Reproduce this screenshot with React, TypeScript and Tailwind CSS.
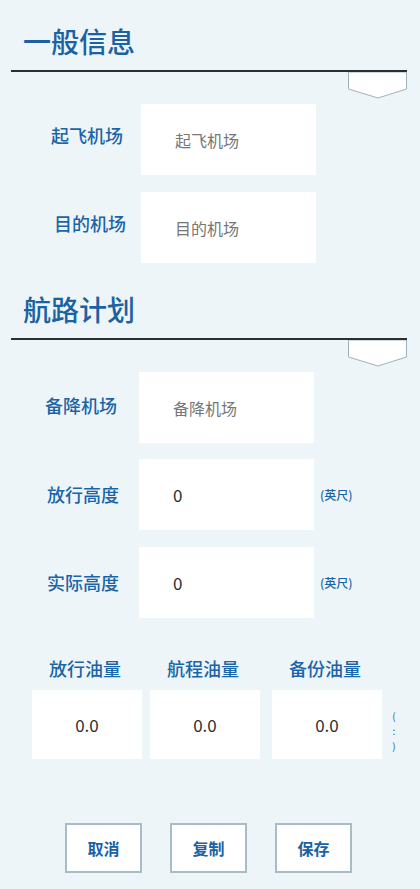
import React from 'react'

const FONT = { fontFamily: '"Noto Sans CJK SC", "Noto Sans", sans-serif' }

function SectionHeader({ title }: { title: string }) {
  return (
    <div>
      <h2 className="pl-[23px] text-[28px] leading-[42px] font-medium text-[#1a62a4]">{title}</h2>
      <div className="relative mt-[8px] ml-[11px] w-[396px] h-[2px] bg-[#2a2f33]">
        <svg className="absolute right-0 top-[2px]" width="59" height="27" viewBox="0 0 59 27">
          <polygon points="0.5,0 58.5,0 58.5,17 30,26 0.5,17" fill="#ffffff" stroke="#9fb1b9" strokeWidth="1" />
        </svg>
      </div>
    </div>
  )
}

function FieldRow({
  label,
  value,
  placeholder,
  unit,
  labelClass,
}: {
  label: string
  value?: string
  placeholder?: string
  unit?: string
  labelClass: string
}) {
  return (
    <div className="flex items-center h-[71px]">
      <div className={`text-center text-[18px] font-medium text-[#1a64a8] ${labelClass}`}>{label}</div>
      <div className="w-[175px] h-[71px] bg-white flex items-center pl-[34px]">
        {value !== undefined ? (
          <span className="text-[17px] text-[#2e2e2e]">{value}</span>
        ) : (
          <span className="text-[16px] text-[#767676]">{placeholder}</span>
        )}
      </div>
      {unit && <span className="ml-[6px] text-[12px] font-medium text-[#1a64a8]">{unit}</span>}
    </div>
  )
}

export default function App() {
  const fuel = [
    { label: '放行油量', value: '0.0' },
    { label: '航程油量', value: '0.0' },
    { label: '备份油量', value: '0.0' },
  ]

  return (
    <div className="w-[420px] min-h-[889px] bg-[#eef5f8] pt-[20px]" style={FONT}>
      <SectionHeader title="一般信息" />

      <div className="mt-[32px] flex flex-col gap-[17px]">
        <FieldRow label="起飞机场" placeholder="起飞机场" labelClass="ml-[38px] w-[98px] mr-[5px] -translate-y-[4px]" />
        <FieldRow label="目的机场" placeholder="目的机场" labelClass="ml-[41px] w-[98px] mr-[2px] -translate-y-[4px]" />
      </div>

      <div className="mt-[25px]">
        <SectionHeader title="航路计划" />
      </div>

      <div className="mt-[32px] flex flex-col gap-[16px]">
        <FieldRow label="备降机场" placeholder="备降机场" labelClass="ml-[32px] w-[98px] mr-[9px] -translate-y-[2px]" />
        <FieldRow label="放行高度" value="0" unit="(英尺)" labelClass="ml-[34px] w-[98px] mr-[7px]" />
        <div className="mt-[1px]">
          <FieldRow label="实际高度" value="0" unit="(英尺)" labelClass="ml-[34px] w-[98px] mr-[7px]" />
        </div>
      </div>

      <div className="mt-[37px] flex items-end pl-[32px]">
        {fuel.map((f, i) => (
          <div key={f.label} className={`flex flex-col items-center w-[110px] ${i === 1 ? 'ml-[8px]' : i === 2 ? 'ml-[12px]' : ''}`}>
            <div className="text-[18px] leading-[27px] font-medium text-[#1a64a8] -translate-x-[2px]">{f.label}</div>
            <div className="mt-[8px] w-[110px] h-[69px] bg-white flex items-center justify-center">
              <span className="text-[17px] text-[#2e2e2e]">{f.value}</span>
            </div>
          </div>
        ))}
        <div className="ml-[10px] mb-[6px] flex flex-col items-center text-[10px] leading-[15px] text-[#1a64a8] w-[4px] overflow-hidden">
          <span>(</span>
          <span>:</span>
          <span>)</span>
        </div>
      </div>

      <div className="mt-[64px] flex justify-center gap-[28px] pr-[3px]">
        {['取消', '复制', '保存'].map(t => (
          <button
            key={t}
            className="w-[77px] h-[50px] bg-white border-2 border-[#a9bcc6] text-[16px] font-bold text-[#1a62a4]"
          >
            {t}
          </button>
        ))}
      </div>
    </div>
  )
}
